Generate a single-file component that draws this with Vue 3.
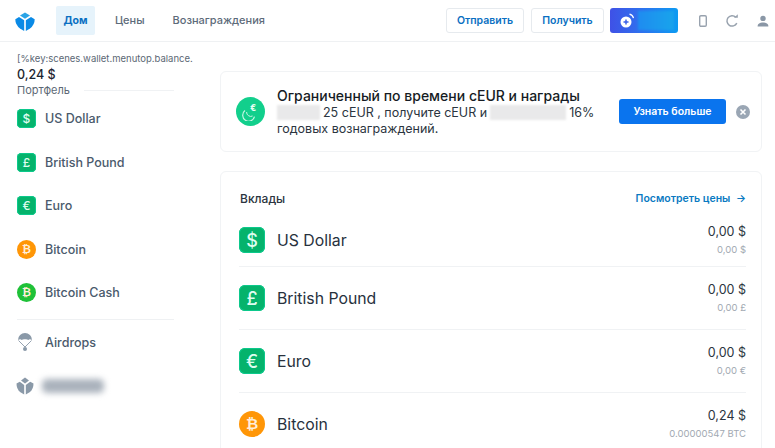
<script setup>
const sideAssets = [
  { name: 'US Dollar', kind: 'square', glyph: '$', color: '#05b36c' },
  { name: 'British Pound', kind: 'square', glyph: '£', color: '#05b36c' },
  { name: 'Euro', kind: 'square', glyph: '€', color: '#05b36c' },
  { name: 'Bitcoin', kind: 'round', glyph: '₿', color: '#ff9607' },
  { name: 'Bitcoin Cash', kind: 'round', glyph: '₿', color: '#1fc138' }
]

const deposits = [
  { name: 'US Dollar', kind: 'square', glyph: '$', color: '#05b36c', value: '0,00 $', sub: '0,00 $' },
  { name: 'British Pound', kind: 'square', glyph: '£', color: '#05b36c', value: '0,00 $', sub: '0,00 £' },
  { name: 'Euro', kind: 'square', glyph: '€', color: '#05b36c', value: '0,00 $', sub: '0,00 €' },
  { name: 'Bitcoin', kind: 'round', glyph: '₿', color: '#ff9607', value: '0,24 $', sub: '0.00000547 BTC' }
]
</script>

<template>
  <div class="page">
    <header class="topbar">
      <svg class="logo" width="20" height="20" viewBox="0 0 20 20">
        <path d="M10 0.5 L15 3.6 L10 6.8 L5 3.6 Z" fill="#2ba4e6" />
        <path d="M0.3 7.2 L4 5 L9.2 8.3 L9.2 19 L5 16.4 Q0.3 12.8 0.3 7.2 Z" fill="#0a8ae6" />
        <path d="M19.7 7.2 L16 5 L10.8 8.3 L10.8 19 L15 16.4 Q19.7 12.8 19.7 7.2 Z" fill="#0a8ae6" />
      </svg>
      <nav class="nav">
        <a class="nav-item active">Дом</a>
        <a class="nav-item">Цены</a>
        <a class="nav-item">Вознаграждения</a>
      </nav>
      <div class="actions">
        <button class="btn-outline send">Отправить</button>
        <button class="btn-outline receive">Получить</button>
        <button class="btn-grad">
          <svg width="16" height="16" viewBox="0 0 16 16">
            <circle cx="7" cy="9" r="5.500" fill="#fff" />
            <path d="M7 6.500v5M4.500 9h5" stroke="#3a5fe8" stroke-width="1.500" />
            <path d="M10.500 1.200a5.500 5.500 0 0 1 4 4" stroke="#fff" stroke-width="1.200" fill="none" />
          </svg>
          <span class="grad-blur"></span>
        </button>
        <div class="tools">
          <svg width="8" height="12" viewBox="0 0 8 12">
            <rect x="0.700" y="0.700" width="6.600" height="10.600" rx="1.200" fill="none" stroke="#98a2ae" stroke-width="1.400" />
          </svg>
          <svg width="14" height="14" viewBox="0 0 14 14">
            <path d="M11.800 9.200A5.200 5.200 0 1 1 10.800 3.200" fill="none" stroke="#98a2ae" stroke-width="1.500" />
            <path d="M9 3.800h3.800V0.200Z" fill="#98a2ae" />
          </svg>
          <svg width="12" height="12" viewBox="0 0 12 12">
            <circle cx="6" cy="3.400" r="2.700" fill="#8a97a6" />
            <path d="M0.600 11.400C0.600 8.400 3 7.400 6 7.400s5.400 1 5.400 4Z" fill="#8a97a6" />
          </svg>
        </div>
      </div>
    </header>

    <div class="body">
      <aside class="sidebar">
        <div class="balance-key">[%key:scenes.wallet.menutop.balance.</div>
        <div class="balance">0,24 $</div>
        <div class="portfolio">
          <span>Портфель</span>
          <i class="portfolio-line"></i>
        </div>
        <div class="side-list">
          <div v-for="a in sideAssets" :key="a.name" class="side-row">
            <span class="coin coin-sm" :class="a.kind" :style="{ background: a.color }">{{ a.glyph }}</span>
            <span>{{ a.name }}</span>
          </div>
        </div>
        <div class="side-sep"></div>
        <div class="side-row airdrops">
          <svg class="side-svg" width="19" height="20" viewBox="0 0 19 20">
            <path d="M1 8a7 7 0 0 1 14 0c-1.500-1-3-1-3.600 0-1-.9-5.800-.9-6.800 0C4 7 2.500 7 1 8Z" fill="#8a99a8" />
            <path d="M1.500 8.500 8 15l6.500-6.500" stroke="#8a99a8" stroke-width="0.900" fill="none" />
            <circle cx="8" cy="17" r="2" fill="#8a99a8" />
          </svg>
          <span>Airdrops</span>
        </div>
        <div class="side-row exchange">
          <svg class="side-svg" width="20" height="20" viewBox="0 0 20 20">
            <path d="M10 1.500 14 4.500 10 7.500 6 4.500Z" fill="#8a99a8" />
            <path d="M1.500 7.500 4.800 5.800 9.200 9V18.500L5 16Q1.500 13 1.500 7.500Z" fill="#8a99a8" />
            <path d="M18.500 7.500 15.200 5.800 10.800 9V18.500L15 16Q18.500 13 18.500 7.500Z" fill="#8a99a8" />
          </svg>
          <span class="blur-label"></span>
        </div>
      </aside>

      <main class="main">
        <section class="card banner">
          <span class="promo-icon">
            <svg width="18" height="18" viewBox="0 0 18 18">
              <path d="M3 7.500a6 6 0 1 0 9.500 6.200" fill="none" stroke="#c8f5e4" stroke-width="1.200" />
              <path d="M4.600 9a4.200 4.200 0 0 0 6 4" fill="none" stroke="#c8f5e4" stroke-width="1" />
              <text x="8.500" y="8" class="promo-euro">€</text>
            </svg>
          </span>
          <div class="banner-text">
            <div class="banner-title">Ограниченный по времени cEUR и награды</div>
            <div class="banner-line">
              <span class="smudge smudge-a"></span>25 cEUR , получите cEUR и<span class="smudge smudge-b"></span>16%
            </div>
            <div class="banner-line">годовых вознаграждений.</div>
          </div>
          <button class="btn-primary">Узнать больше</button>
          <svg class="close" width="14" height="14" viewBox="0 0 14 14">
            <circle cx="7" cy="7" r="7" fill="#9aa6b4" />
            <path d="M4.500 4.500l5 5M9.500 4.500l-5 5" stroke="#fff" stroke-width="1.600" />
          </svg>
        </section>

        <section class="card deposits">
          <div class="deposits-head">
            <span class="deposits-title">Вклады</span>
            <a class="prices-link">Посмотреть цены <span class="arrow">→</span></a>
          </div>
          <div v-for="d in deposits" :key="d.name" class="dep-row">
            <span class="coin coin-lg" :class="d.kind" :style="{ background: d.color }">{{ d.glyph }}</span>
            <span class="dep-name">{{ d.name }}</span>
            <div class="dep-values">
              <div class="dep-value">{{ d.value }}</div>
              <div class="dep-sub">{{ d.sub }}</div>
            </div>
          </div>
        </section>
      </main>
    </div>
  </div>
</template>

<style>
html, body { margin: 0; background: #fff; overflow: hidden; }
</style>

<style scoped>
.page {
  width: 775px;
  height: 448px;
  overflow: hidden;
  font-family: Inter, "Liberation Sans", sans-serif;
  color: #1c2530;
  background: #fff;
}
.topbar {
  height: 42px;
  box-sizing: border-box;
  border-bottom: 1px solid #eff1f3;
  display: flex;
  align-items: center;
  padding-left: 15px;
}
.logo { flex-shrink: 0; margin-top: 3px; }
.nav {
  display: flex;
  align-items: center;
  margin-left: 21px;
  font-size: 11px;
  font-weight: 500;
  color: #5d6b7a;
}
.nav-item { padding: 0 10px; line-height: 29px; margin-right: 10px; border-radius: 2px; }
.nav-item:nth-child(3) { padding: 0; margin-left: 8px; }
.nav-item.active {
  width: 39px;
  box-sizing: border-box;
  text-align: center;
  background: #e6f3fb;
  color: #0a6fc2;
  font-size: 10.500px;
  font-weight: 700;
  padding: 0;
}
.actions { margin-left: auto; display: flex; align-items: center; }
.btn-outline {
  height: 25px;
  box-sizing: border-box;
  border: 1px solid #e6eaee;
  border-radius: 3px;
  background: #fff;
  color: #0a6fc2;
  font: 600 10.500px Inter, "Liberation Sans", sans-serif;
  padding: 0;
}
.send { width: 78px; margin-right: 7px; }
.receive { width: 73px; margin-right: 6px; }
.btn-grad {
  width: 68px;
  height: 25px;
  border: 0;
  border-radius: 3px;
  padding: 0 0 0 9px;
  display: flex;
  align-items: center;
  background: linear-gradient(90deg, #3f51e6 0%, #2f70ee 45%, #0c9bf2 100%);
}
.grad-blur {
  width: 36px;
  height: 19px;
  margin-left: 3px;
  background: linear-gradient(90deg, #1f8cf0, #18a4ec);
  filter: blur(1px);
}
.tools {
  display: flex;
  align-items: center;
  width: 97px;
  padding-left: 21px;
  gap: 18px;
  box-sizing: border-box;
}
.body { display: flex; }
.sidebar { width: 157px; margin-left: 17px; flex-shrink: 0; padding-top: 10px; }
.balance-key { font-size: 9.500px; line-height: 13px; color: #5c6875; white-space: nowrap; }
.balance { font-size: 12.500px; line-height: 16px; font-weight: 500; margin-top: 2px; }
.portfolio {
  display: flex;
  align-items: center;
  font-size: 11px;
  line-height: 14px;
  color: #5c6875;
}
.portfolio-line { flex: 1; height: 1px; background: #f0f2f4; margin-left: 14px; }
.side-row {
  height: 43.500px;
  display: flex;
  align-items: center;
  gap: 9px;
  font-size: 12.500px;
  font-weight: 500;
  color: #4a5a6c;
}
.coin {
  display: flex;
  align-items: center;
  justify-content: center;
  flex-shrink: 0;
  color: #dffdf0;
  font-weight: 500;
}
.coin.square { border-radius: 23%; box-shadow: inset 0 0 0 1px #0cc98c; }
.coin.round { border-radius: 50%; color: #ffeeda; font-family: "DejaVu Sans", sans-serif; font-weight: 700; }
.coin-sm { width: 19px; height: 19px; font-size: 12px; }
.coin-lg { width: 26px; height: 26px; font-size: 18px; }
.coin-lg.round { font-size: 15px; }
.coin-sm.round { font-size: 11px; }
.side-sep { height: 1px; background: #eff1f3; margin-top: 4px; }
.airdrops { margin-top: 1px; }
.side-svg { flex-shrink: 0; }
.airdrops .side-svg { margin-right: 0; }
.exchange .side-svg { margin-left: -2px; }
.blur-label {
  width: 62px;
  height: 14px;
  margin-left: -2px;
  border-radius: 5px;
  background: #aab2bc;
  filter: blur(3px);
}
.main { width: 542px; margin-left: 46px; padding-top: 29px; }
.card {
  box-sizing: border-box;
  border: 1px solid #f1f3f5;
  border-radius: 6px;
  background: #fff;
}
.banner {
  height: 81px;
  display: flex;
  align-items: center;
  padding: 0 11px 0 15px;
}
.promo-icon {
  width: 29px;
  height: 29px;
  border-radius: 50%;
  background: #12cf8c;
  flex-shrink: 0;
  display: flex;
  align-items: center;
  justify-content: center;
}
.promo-euro { font: 700 8px "DejaVu Sans", sans-serif; fill: #e6fff5; }
.banner-text { margin-left: 12px; width: 342px; flex-shrink: 0; }
.banner-title { font-size: 14px; line-height: 18px; font-weight: 500; color: #161c24; white-space: nowrap; }
.banner-line { font-size: 12.500px; line-height: 16px; color: #2b3540; white-space: nowrap; display: flex; align-items: center; }
.smudge { display: inline-block; height: 15px; background: #e9e9ea; filter: blur(1px); }
.smudge-a { width: 43px; margin-right: 3px; }
.smudge-b { width: 76px; margin: 0 3px; }
.btn-primary {
  width: 107px;
  height: 25px;
  border: 0;
  border-radius: 3px;
  background: #0a74ee;
  color: #fff;
  font: 600 10.500px Inter, "Liberation Sans", sans-serif;
  flex-shrink: 0;
}
.close { margin-left: 10px; flex-shrink: 0; }
.deposits { margin-top: 19px; height: 320px; padding: 0 15px 0 18px; }
.deposits-head {
  display: flex;
  justify-content: space-between;
  align-items: center;
  height: 42px;
  padding-top: 11px;
  padding-left: 1px;
  box-sizing: border-box;
}
.deposits-title { font-size: 12px; font-weight: 500; color: #2b3540; }
.prices-link { font-size: 10.500px; font-weight: 600; color: #0a7ac2; }
.arrow { margin-left: 3px; }
.dep-row {
  height: 63px;
  box-sizing: border-box;
  display: flex;
  align-items: center;
  border-bottom: 1px solid #f0f2f4;
}
.deposits-head + .dep-row { height: 53px; }
.dep-name { margin-left: 12px; font-size: 15.800px; color: #27313d; }
.dep-values { margin-left: auto; text-align: right; }
.dep-value { font-size: 12.500px; line-height: 17px; color: #2b3540; }
.dep-sub { font-size: 9.500px; line-height: 14px; margin-top: 3px; color: #a2a9b2; }
</style>
